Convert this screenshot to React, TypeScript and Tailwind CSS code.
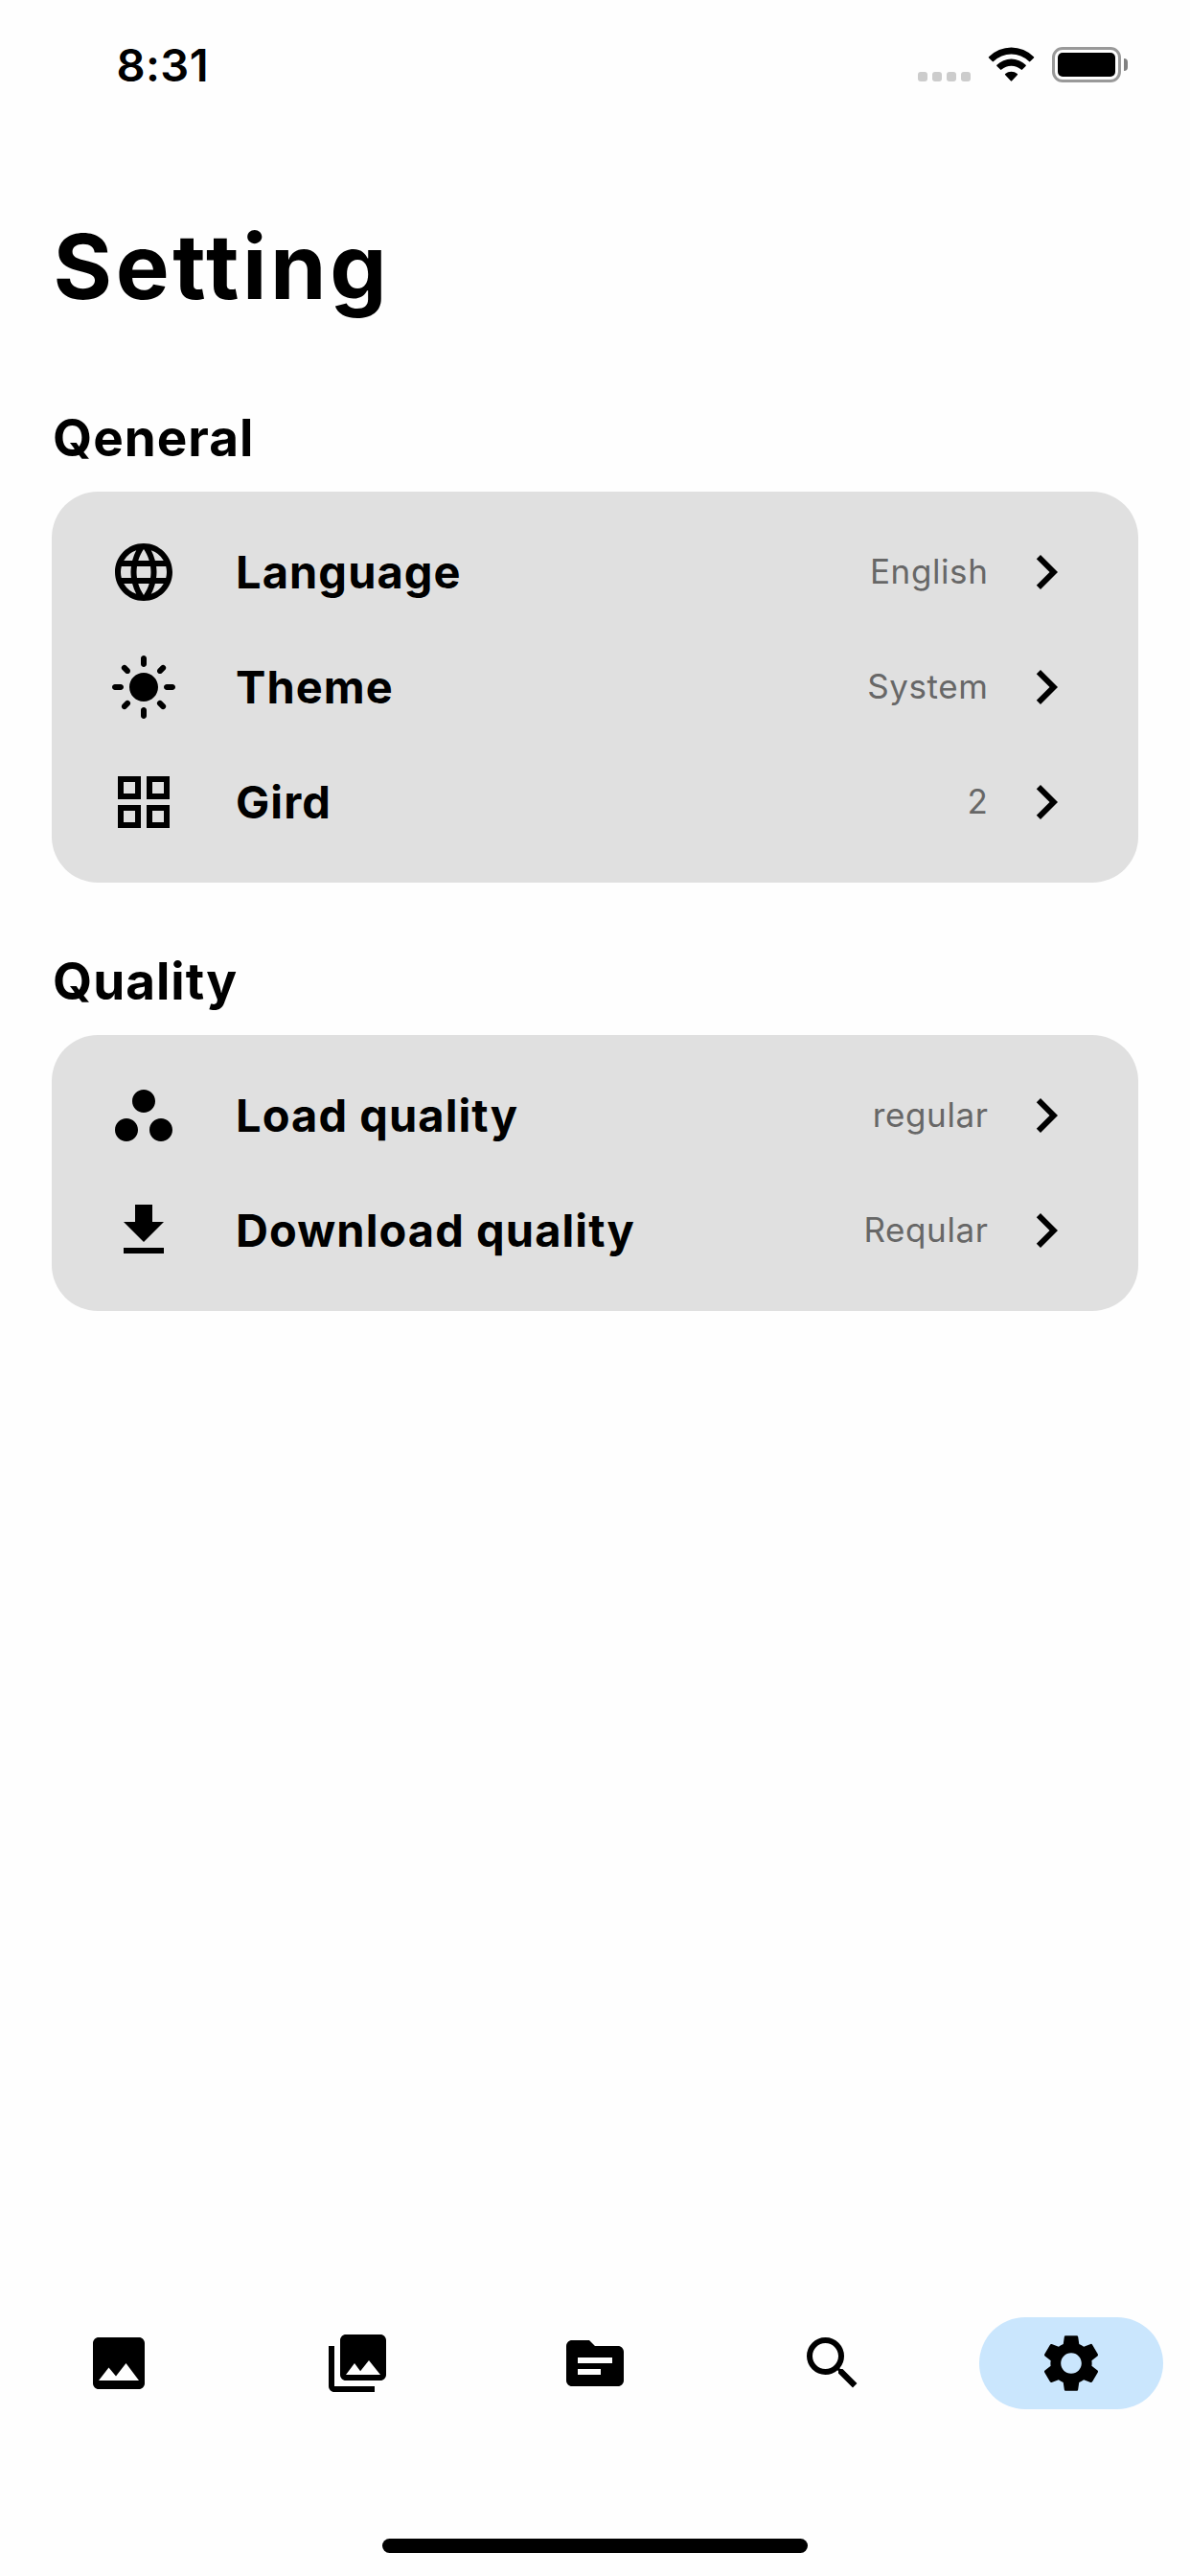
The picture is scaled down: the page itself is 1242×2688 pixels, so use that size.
import type { ReactNode } from "react";
import {
  MdChevronRight,
  MdFileDownload,
  MdGridView,
  MdImage,
  MdLanguage,
  MdLightMode,
  MdPhotoLibrary,
  MdSearch,
  MdSettings,
  MdSource,
  MdWorkspaces,
} from "react-icons/md";

function StatusBar() {
  return (
    <header className="flex h-[136px] items-center justify-between pl-[121.5px] pr-[65px]">
      <time className="text-[47px] font-semibold leading-[60px] tracking-[0.4px]">8:31</time>
      <div className="flex h-[38px] items-start">
        <div className="mt-[26px] flex gap-[5px]">
          <span className="size-[10px] rounded-[3px] bg-[#cccccc]" />
          <span className="size-[10px] rounded-[3px] bg-[#cccccc]" />
          <span className="size-[10px] rounded-[3px] bg-[#cccccc]" />
          <span className="size-[10px] rounded-[3px] bg-[#cccccc]" />
        </div>
        <svg className="ml-[18px] h-[36px] w-[49px]" viewBox="-0.7 0 49 36" fill="currentColor">
          <path d="M0.4 10.2A33 33 0 0 1 47.2 10.2Q47.9 10.9 47.2 11.5L43.6 15.1Q43 15.7 42.3 15.1A26.5 26.5 0 0 0 5.3 15.1Q4.6 15.7 4 15.1L0.4 11.5Q-0.3 10.9 0.4 10.2Z" />
          <path d="M8.7 18.7A21.6 21.6 0 0 1 38.9 18.7Q39.5 19.4 38.9 20L35.3 23.6Q34.7 24.2 34 23.6A15.6 15.6 0 0 0 13.6 23.6Q12.9 24.2 12.3 23.6L8.7 20Q8.1 19.4 8.7 18.7Z" />
          <path d="M17.5 28A9.6 9.6 0 0 1 30.1 28Q30.8 28.6 30.1 29.3L24.5 35.3Q23.8 36 23.1 35.3L17.5 29.3Q16.8 28.6 17.5 28Z" />
        </svg>
        <div className="ml-[18px] flex h-[37px] w-[72px] rounded-[11px] border-[3px] border-[#999999] p-[3px]">
          <span className="flex-1 rounded-[5px] bg-black" />
        </div>
        <span className="ml-[3px] mt-[12px] h-[13px] w-[4px] rounded-r-full bg-[#808080]" />
      </div>
    </header>
  );
}

function Row({ icon, label, value }: { icon: ReactNode; label: string; value: string }) {
  return (
    <li className="flex h-[120px] items-center pl-[60px] pr-[60px]">
      <span className="text-[72px]">{icon}</span>
      <span className="ml-[60px] flex-1 text-[47px] font-bold tracking-[1.08px]">{label}</span>
      <span className="mr-[24.5px] pb-0.5 text-[35px] tracking-[0.6px] text-[#676767]">{value}</span>
      <MdChevronRight className="text-[72px]" />
    </li>
  );
}

function Section({ title, children }: { title: string; children: ReactNode }) {
  return (
    <section>
      <h2 className="pl-px text-[53px] font-bold leading-[64px] tracking-[1px]">{title}</h2>
      <ul className="mt-6 rounded-[48px] bg-[#e0e0e0] py-6">{children}</ul>
    </section>
  );
}

function NavItem({ active = false, children }: { active?: boolean; children: ReactNode }) {
  return (
    <div className="flex flex-1 justify-center">
      <button
        className={
          active
            ? "flex h-24 w-48 items-center justify-center rounded-full bg-[#cae6fd] text-[72px]"
            : "flex h-24 w-48 items-center justify-center rounded-full text-[72px]"
        }
      >
        {children}
      </button>
    </div>
  );
}

export default function App() {
  return (
    <div className="flex h-[2688px] w-[1242px] flex-col bg-[#fefefe] font-['Inter',sans-serif] text-black">
      <StatusBar />
      <main className="flex flex-1 flex-col px-[54px]">
        <h1 className="mt-[82px] pl-[1.5px] text-[94px] font-bold leading-[120px] tracking-[3.6px]">
          Setting
        </h1>
        <div className="mt-[87px] flex flex-col gap-[71px]">
          <Section title="Qeneral">
            <Row icon={<MdLanguage />} label="Language" value="English" />
            <Row icon={<MdLightMode />} label="Theme" value="System" />
            <Row icon={<MdGridView />} label="Gird" value="2" />
          </Section>
          <Section title="Quality">
            <Row icon={<MdWorkspaces />} label="Load quality" value="regular" />
            <Row icon={<MdFileDownload />} label="Download quality" value="Reqular" />
          </Section>
        </div>
      </main>
      <nav className="mb-[135px] flex">
        <NavItem><MdImage /></NavItem>
        <NavItem><MdPhotoLibrary /></NavItem>
        <NavItem><MdSource /></NavItem>
        <NavItem><MdSearch /></NavItem>
        <NavItem active><MdSettings /></NavItem>
      </nav>
      <div className="mx-auto mb-6 h-[15px] w-[444px] rounded-full bg-black" />
    </div>
  );
}
